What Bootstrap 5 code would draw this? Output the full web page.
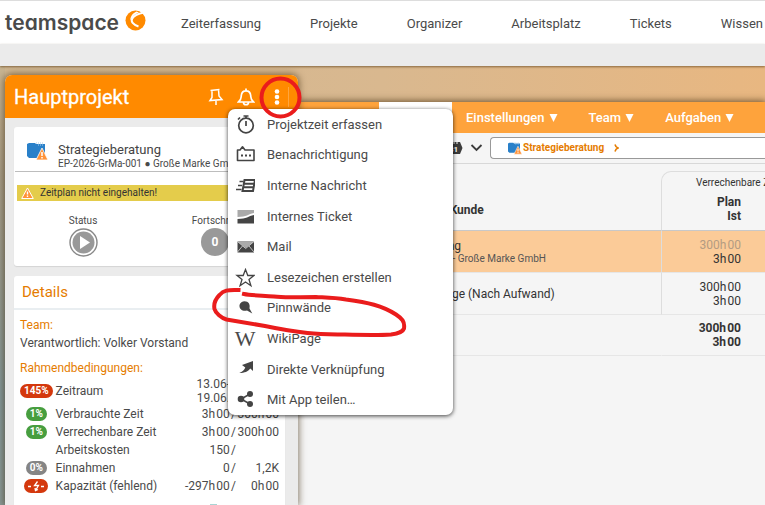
<!DOCTYPE html>
<html lang="de">
<head>
<meta charset="utf-8">
<meta name="viewport" content="width=device-width, initial-scale=1">
<title>teamspace – Hauptprojekt</title>
<link href="https://cdn.jsdelivr.net/npm/bootstrap@5.3.0/dist/css/bootstrap.min.css" rel="stylesheet">
<style>
:root{--ink:#4a4a4a;--brand:#ff8a00;--accent:#e57c00}
body{font-family:Roboto,"Liberation Sans",sans-serif;font-size:13px;line-height:18px;color:var(--ink);background:linear-gradient(90deg,#d0b792,#d9b88f 50%,#e8b781)}
a{color:inherit;text-decoration:none}
button{color:inherit}
svg{display:block;flex:none}
.topbar{height:44px;border-top:1px solid #ddd;padding-left:5px}
.brand{gap:6px}
.brand-name{font:600 21px/24px Inter,sans-serif;font-feature-settings:"cv11";color:#4a4a4a}
.topnav{gap:49px;padding-left:35px;padding-top:2px}
.subbar{height:22px;background:#ebebeb;box-shadow:0 1px 2px rgba(80,50,10,.6);z-index:1}
.stage{padding-left:5px;background:linear-gradient(#c9b592,#a79d88 25%,#959a90 50%,#82979a 75%,#8a9a98) left/5px 100% no-repeat}
.side{width:293px;margin-top:9px;background:#ebebeb;border-radius:7px 7px 0 0;box-shadow:0 0 7px 1px rgba(60,40,10,.6);z-index:2}
.side-head{height:43px;background:var(--brand);border-radius:7px 7px 0 0;padding:0 9px}
.side-title{font-size:20px;line-height:24px;font-weight:400;-webkit-text-stroke:.3px #fff}
.side-tools{gap:13px}
.tool-sep{width:1px;height:20px;margin-left:-11px;background:#ffa53d}
.side-body{padding:9px 13px 0 9px;gap:10px}
.panel{background:#fff;border-radius:3px;box-shadow:0 1px 1px #d4d4d4}
.proj-head{height:45px;border-bottom:1px solid #bdbdbd;padding:15px 0 0 12px;margin:0 1px;gap:10px}
.proj-name{font-size:13px;line-height:16px;color:#444}
.tiny{font-size:10px;line-height:12px}
.warn{height:16px;margin:13px 0 0 3px;padding-left:4px;gap:6px;background:#e4cc4b;color:#333;font-size:10px;line-height:16px}
.gauges{padding:14px 0 9px 3px}
.gauge{width:132px;gap:1px}
.gauge-zero{width:28px;height:28px;border-radius:50%;background:#999;color:#fff;font-weight:700;font-size:12px}
.details-title{font-size:15px;line-height:32px;color:var(--accent);border-bottom:2px solid #e9eef1;padding-left:8px}
.details{padding:6px 6px 0;font-size:12px;line-height:18px}
.label{color:var(--accent);font-size:12px;line-height:18px}
.label-next{margin-top:7px}
.facts{width:100%;line-height:14px}
.facts td,.facts th{padding:0;font-weight:400;height:18px;white-space:nowrap;vertical-align:middle}
.facts .tag{width:32px;text-align:center}
.facts .tag+th{padding-left:3px}
.facts .num{text-align:right}
.facts .dates{padding-right:6px}
.facts .lim{text-align:right;width:43px}
.pct{display:inline-block;border-radius:7px;color:#fff;font-size:10px;font-weight:700;line-height:14px;height:14px;padding:0 4px;vertical-align:top}
.red{background:#d4380d}.green{background:#479e3f}.grey{background:#858585}
.chart-bar{width:7px;height:12px;margin:9px 0 0 190px;background:#a9d5d5}
.main{margin-top:36px;background:#f5f5f5;box-shadow:0 0 7px 1px rgba(60,40,10,.7)}
.tabs{height:31px;background:#fea33c;color:#fff;font-weight:500;padding-left:81px;gap:31px}
.tab-active{width:73px;background:#fff;margin-right:-17px}
.crumbbar{height:31px;border-bottom:1px solid #d8d8d8;padding:4px 0 4px 148px;gap:7px}
.crumb{height:22px;background:#fff;border:1px solid #999;border-right:0;border-radius:4px 0 0 4px;padding-left:17px;color:var(--accent);font-size:10px;font-weight:700;gap:1px}
.crumb-arrow{margin-left:9px}
.grid-wrap{padding-top:7px}
.grid{width:100%;font-size:12px;line-height:14px;color:#333;border-collapse:separate;border-spacing:0}
.grid th,.grid td{white-space:nowrap;padding:0;border-bottom:1px solid #e6e6e6}
.grid .what{padding-left:68px}
.grid .hours{width:104px;text-align:right;padding-right:24px;border-left:1px solid #ddd}
.grid thead th{border-bottom-color:#c8c8c8}
.grid .group{height:22px;max-width:104px;overflow:hidden;font-weight:400;font-size:10px;text-align:left;padding-left:34px;border:1px solid #ddd;border-width:1px 0 0 1px;border-radius:10px 0 0 0}
.grid .caption-row th{height:38px;padding-bottom:5px}
.grid .caption-row .what{padding-left:72px;padding-bottom:3px}
.grid tbody td{height:42px}
.grid .current td{background:#fbcb98}
.grid .current .plan{color:#b39b82}
.grid .tiny{color:#555}
.grid .sum td{font-weight:700;height:41px}
.grid .sum .hours{border-left-color:transparent}
.menu{left:228px;top:109px;width:225px;height:306px;background:#fff;border-radius:7px;box-shadow:0 1px 4px rgba(0,0,0,.75);z-index:5}
.menu button{font-size:13px;line-height:18px;padding:1px 7px 0;gap:12px;background:none;border:0;text-align:left}
.ink-layer{left:0;top:0;z-index:9;pointer-events:none}
.wiki{width:20px;font:400 22px/20px "Liberation Serif",serif;display:flex;justify-content:center}
</style>
<script src="https://cdn.jsdelivr.net/npm/bootstrap@5.3.0/dist/js/bootstrap.bundle.min.js"></script>
</head>
<body class="vh-100 overflow-hidden d-flex flex-column position-relative">
<svg width="0" height="0" class="position-absolute" aria-hidden="true">
<symbol id="folder" viewBox="0 0 21 19"><path fill="#2980c9" d="M0 2 2 1h6l1 1h9v14H2L0 14z"/><path d="M9 1h1m1 0h1m1 0h1m1 0h1M11 3h1m1 0h1m1 0h1" stroke="#a8cdeb" stroke-width="1"/><path fill="#ff9238" stroke="#fff" stroke-width=".8" d="M15 6 21 18H9z"/><path stroke="#fff" stroke-width="1.500" d="M15 10v4m0 1v1.500"/></symbol>
<symbol id="tri" viewBox="0 0 9 8"><path fill="#fff" d="M.5 0h8l-4 8z"/></symbol>
</svg>

<header class="topbar bg-white d-flex align-items-center flex-shrink-0">
  <a href="#" class="brand d-flex align-items-center"><span class="brand-name">teamspace</span>
    <svg width="21" height="21" viewBox="0 0 21 21" class="mb-1" aria-hidden="true"><circle cx="10.500" cy="10.500" r="10" fill="#ff8a00"/><path fill="none" stroke="#fff" stroke-width="2" d="M19 2.500C14 3.500 9 5.500 7.300 8.500 5.500 11.500 8 14.500 13.500 16.500"/><path fill="#fff" d="M11.500 1.500C8 3 5.500 6 5.300 10l2-2C8 6 10 4 14 2.500z"/></svg></a>
  <nav class="topnav d-flex text-nowrap"><a href="#">Zeiterfassung</a><a href="#">Projekte</a><a href="#">Organizer</a><a href="#">Arbeitsplatz</a><a href="#">Tickets</a><a href="#">Wissen</a></nav>
</header>
<div class="subbar flex-shrink-0 position-relative"></div>

<div class="stage d-flex flex-fill overflow-hidden">
  <aside class="side flex-shrink-0 position-relative d-flex flex-column">
    <div class="side-head d-flex align-items-center justify-content-between text-white flex-shrink-0">
      <h1 class="side-title m-0">Hauptprojekt</h1>
      <div class="side-tools d-flex align-items-center">
        <button class="btn p-0 border-0" aria-label="Anheften"><svg width="16" height="20" viewBox="0 0 16 20" fill="none" stroke="#fff" stroke-width="1.500"><path d="M2.500 3.500 11.500 2.500M4 3.500V10.500L2 13.500l12-1-3-3.500L10.500 2.500M8 13V18"/></svg></button>
        <button class="btn p-0 border-0" aria-label="Benachrichtigungen"><svg width="18" height="20" viewBox="0 0 18 20" fill="none" stroke="#fff" stroke-width="1.700"><path d="M1.500 15C4.500 12.500 4 11 4.300 8.500 4.600 5.500 6 3.800 9 3.800s4.400 1.700 4.700 4.700c.3 2.500-.2 4 2.800 6.500zM9 1.500v2M6.500 15.500c0 3 5 3 5 0"/></svg></button>
        <button class="btn p-0 border-0" aria-label="Weitere Aktionen"><svg width="18" height="18" viewBox="0 0 18 18" fill="#fff"><circle cx="9" cy="3.500" r="2.300"/><circle cx="9" cy="9" r="2.300"/><circle cx="9" cy="14.500" r="2.300"/></svg></button>
        <span class="tool-sep"></span>
      </div>
    </div>
    <div class="side-body d-flex flex-column flex-fill">
      <section class="panel">
        <div class="proj-head d-flex align-items-start overflow-hidden">
          <svg width="21" height="19"><use href="#folder"/></svg>
          <div class="text-nowrap"><div class="proj-name">Strategieberatung</div><div class="tiny">EP-2026-GrMa-001 ● Große Marke GmbH</div></div>
        </div>
        <div class="warn d-flex align-items-center"><svg width="13" height="12" viewBox="0 0 13 12"><path fill="#ff9238" stroke="#fff" d="M6.500 1 12.300 11.500H.7z"/><path stroke="#fff" stroke-width="1.400" d="M6.500 4.500v3m0 1v1.400"/></svg>Zeitplan nicht eingehalten!</div>
        <div class="gauges d-flex">
          <div class="gauge d-flex flex-column align-items-center tiny">Status<svg width="29" height="29" viewBox="0 0 29 29"><circle cx="14.500" cy="14.500" r="13.500" fill="#fff" stroke="#888" stroke-width="1.400"/><circle cx="14.500" cy="14.500" r="11" fill="#999"/><path fill="#fff" d="M11 8v13l10-6.500z"/></svg></div>
          <div class="gauge d-flex flex-column align-items-center tiny">Fortschritt<span class="gauge-zero d-flex align-items-center justify-content-center">0</span></div>
        </div>
      </section>
      <section class="panel flex-fill">
        <h2 class="details-title m-0 fw-normal">Details</h2>
        <div class="details">
          <div class="label">Team:</div>
          <div>Verantwortlich: Volker Vorstand</div>
          <div class="label label-next">Rahmendbedingungen:</div>
          <table class="facts">
            <tr><td class="tag"><span class="pct red">145%</span></td><th scope="row">Zeitraum</th><td class="num dates">13.06-<br>19.06.</td><td class="lim"></td></tr>
            <tr><td class="tag"><span class="pct green">1%</span></td><th scope="row">Verbrauchte Zeit</th><td class="num">3h&#8202;00&#8202;/</td><td class="lim">300h&#8202;00</td></tr>
            <tr><td class="tag"><span class="pct green">1%</span></td><th scope="row">Verrechenbare Zeit</th><td class="num">3h&#8202;00&#8202;/</td><td class="lim">300h&#8202;00</td></tr>
            <tr><td class="tag"></td><th scope="row">Arbeitskosten</th><td class="num">150&#8202;/</td><td class="lim"></td></tr>
            <tr><td class="tag"><span class="pct grey">0%</span></td><th scope="row">Einnahmen</th><td class="num">0&#8202;/</td><td class="lim">1,2K</td></tr>
            <tr><td class="tag"><span class="pct red"><svg width="16" height="14" viewBox="0 0 16 14" fill="none" stroke="#fff" stroke-width="1.300"><path d="M0 7.500h3M13 7.500h3M9.500 2.500 6.500 6.500h4L7.500 11.500M7 9l.5 2.500L10 10.500"/></svg></span></td><th scope="row">Kapazität (fehlend)</th><td class="num">-297h&#8202;00&#8202;/</td><td class="lim">0h&#8202;00</td></tr>
          </table>
          <div class="chart-bar"></div>
        </div>
      </section>
    </div>
  </aside>

  <main class="main flex-fill overflow-hidden">
    <nav class="tabs d-flex text-nowrap align-items-center">
      <span class="tab-active h-100 flex-shrink-0"></span>
      <a href="#" class="d-flex align-items-center gap-1">Einstellungen<svg width="9" height="8"><use href="#tri"/></svg></a>
      <a href="#" class="d-flex align-items-center gap-1">Team<svg width="9" height="8"><use href="#tri"/></svg></a>
      <a href="#" class="d-flex align-items-center gap-1">Aufgaben<svg width="9" height="8"><use href="#tri"/></svg></a>
    </nav>
    <div class="crumbbar d-flex align-items-center">
      <button class="btn p-0 border-0" aria-label="Kalender"><svg width="17" height="14" viewBox="0 0 17 14"><path fill="#3c3c3c" d="M0 1h14l2.500 6-2.500 6H0z"/><path stroke="#f5f5f5" stroke-width="1" d="M2 0v3M5 0v3M8 0v3M11 0v3"/><text x="3" y="11" font-size="8" font-weight="700" font-family="Roboto,sans-serif" fill="#fff">31</text></svg></button>
      <button class="btn p-0 border-0" aria-label="Datum wählen"><svg width="13" height="8" viewBox="0 0 11 8" fill="none" stroke="#3c3c3c" stroke-width="1.800"><path d="m.5 1 5 5 5-5"/></svg></button>
      <div class="crumb d-flex align-items-center flex-fill"><svg width="14" height="13"><use href="#folder"/></svg><a href="#">Strategieberatung</a><svg class="crumb-arrow" width="5" height="8" viewBox="0 0 5 8" fill="none" stroke="#e57c00" stroke-width="1.600"><path d="M1 .5c.5 2 1.500 3 3 3.500C2.500 4.500 1.500 5.500 1 7.500"/></svg></div>
    </div>
    <div class="grid-wrap">
      <table class="grid">
        <thead>
          <tr><td class="border-0"></td><th class="group">Verrechenbare Zeit</th></tr>
          <tr class="caption-row"><th class="what">Projekt, Vorg., Kunde</th><th class="hours">Plan<br>Ist</th></tr>
        </thead>
        <tbody>
          <tr class="current"><td class="what">Strategieberatung<div class="tiny">EP-2026-GrMa-001 - Große Marke GmbH</div></td><td class="hours"><span class="plan">300h&#8202;00</span><br>3h&#8202;00</td></tr>
          <tr><td class="what">Beratungsaufträge (Nach Aufwand)</td><td class="hours">300h&#8202;00<br>3h&#8202;00</td></tr>
          <tr class="sum"><td></td><td class="hours">300h&#8202;00<br>3h&#8202;00</td></tr>
        </tbody>
      </table>
    </div>
  </main>
</div>

<div class="menu position-absolute d-flex flex-column" role="menu">
  <button role="menuitem" class="d-flex align-items-center flex-fill"><svg width="20" height="20" viewBox="0 0 20 20" fill="none" stroke="#444" stroke-width="1.700"><circle cx="11" cy="10.500" r="7.300"/><path d="M11 6v5M8.500 1h5M11 1v2M3 4.500l2-2"/></svg>Projektzeit erfassen</button>
  <button role="menuitem" class="d-flex align-items-center flex-fill"><svg width="20" height="20" viewBox="0 0 20 20"><path fill="none" stroke="#444" stroke-width="1.600" stroke-linejoin="round" d="M2.500 5h2.500L7.500 1.800 10 5h9v10.500H2.500z"/><path fill="#444" d="M6 9.500h2v2H6zm4 0h2v2h-2zm4 0h2v2h-2z"/></svg>Benachrichtigung</button>
  <button role="menuitem" class="d-flex align-items-center flex-fill"><svg width="20" height="20" viewBox="0 0 20 20"><path fill="none" stroke="#444" stroke-width="2" d="M9.500 4H20l-2 11H7.500zM9 7.700h10M8.500 11.300H18"/><path stroke="#444" stroke-width="1.500" d="M4.500 5.500h4M3 9.500h4M1 13.500h5.500"/></svg>Interne Nachricht</button>
  <button role="menuitem" class="d-flex align-items-center flex-fill"><svg width="20" height="20" viewBox="0 0 20 20"><path fill="#aaa" d="M2.500 3H19v3c-6 1-7 4-16.500 4z"/><path fill="#444" d="M2.500 12C12 12 13 9 19 8v8.500H2.500z"/></svg>Internes Ticket</button>
  <button role="menuitem" class="d-flex align-items-center flex-fill"><svg width="20" height="20" viewBox="0 0 20 20"><path fill="#444" d="M2.500 4.500H19v11H2.500z"/><path fill="#aaa" d="M2.500 4.500H19L10.700 11z"/><path fill="none" stroke="#ddd" stroke-width=".8" d="m2.500 4.500 8.200 7 8.300-7M2.500 15l5-6M19 15l-5-6"/></svg>Mail</button>
  <button role="menuitem" class="d-flex align-items-center flex-fill"><svg width="20" height="20" viewBox="0 0 20 20" fill="none" stroke="#444" stroke-width="1.300"><path d="m10.500 1.500 2.300 6H19l-5 4 1.900 6.200-5.400-3.700-5.400 3.700L7 11.500l-5-4h6.200z"/></svg>Lesezeichen erstellen</button>
  <button role="menuitem" class="d-flex align-items-center flex-fill"><svg width="20" height="20" viewBox="0 0 20 20"><path fill="#444" d="M4.500 7C5.500 2.500 12 2 14 5.500c1.200 2.500.4 4 .5 5l2.800 5L12 12.500C8 13.500 4 11.500 4.500 7z"/></svg>Pinnwände</button>
  <button role="menuitem" class="d-flex align-items-center flex-fill"><span class="wiki" aria-hidden="true">W</span>WikiPage</button>
  <button role="menuitem" class="d-flex align-items-center flex-fill"><svg width="20" height="20" viewBox="0 0 20 20"><path fill="#444" d="M18 1v10l-2.700-2.500c-2.300 3-5.500 4.500-11 4.500 3-1 5-3 6-5.500L7 5z"/></svg>Direkte Verknüpfung</button>
  <button role="menuitem" class="d-flex align-items-center flex-fill"><svg width="20" height="20" viewBox="0 0 20 20"><path d="M15 4 6 9l9 5" fill="none" stroke="#444" stroke-width="1.500"/><g fill="#444"><circle cx="15" cy="4" r="3"/><circle cx="6" cy="9" r="3.300"/><circle cx="15" cy="14" r="3"/></g></svg>Mit App teilen…</button>
</div>

<svg class="ink-layer position-absolute" width="460" height="350" viewBox="0 0 460 350" fill="none" stroke="#ea1c1c" stroke-width="4" stroke-linecap="square" aria-hidden="true">
  <circle cx="280.500" cy="97.500" r="19"/>
  <path d="M238.500 290c-11-.5-15 .5-19 5-4 4-6 9-5 14 1 4 7 9 12 10.500L265 326c38 8 55 8 76 8.500 20 .5 36 1 50 0 8-1 12-3 13-6 1-7-2-10-8-14-14-9-28-12-50-15-12-2-22-2-30-2.500-18 0-32 1-42-.5-13-1-23-1-30-2.500"/>
</svg>
</body>
</html>
